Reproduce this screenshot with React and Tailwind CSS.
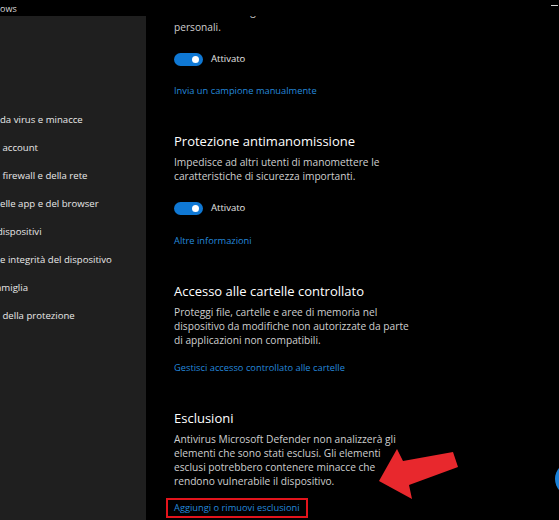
import React from 'react';

const sideItems = [
    { text: 'da virus e minacce', cut: '' },
    { text: ' account', cut: '' },
    { text: ' firewall e della rete', cut: '' },
    { text: 'elle app e del browser', cut: '' },
    { text: 'dispositivi', cut: '-ml-[3px]' },
    { text: 'e integrità del dispositivo', cut: '' },
    { text: 'amiglia', cut: '-ml-[4px]' },
    { text: ' della protezione', cut: '' },
];

const Toggle = () => (
    <div className="flex items-center h-[14px]">
        <div className="w-[29px] h-[13px] rounded-full bg-[#0f78d4] flex items-center justify-end pr-[4px]">
            <div className="w-[7px] h-[7px] rounded-full bg-white" />
        </div>
        <span className="ml-[8px] text-[9.5px] text-[#e6e6e6]">Attivato</span>
    </div>
);

const Link = ({ children, className = '' }) => (
    <div className={`text-[9.3px] leading-[14px] text-[#2589dc] whitespace-nowrap ${className}`}>{children}</div>
);

const Heading = ({ children }) => (
    <h2 className="mt-[33px] text-[13px] leading-[20px] text-white whitespace-nowrap">{children}</h2>
);

const Desc = ({ lines }) => (
    <p className="mt-[4px] text-[10.2px] leading-[14px] text-[#cfcfcf] whitespace-nowrap">
        {lines.map((l, i) => (
            <React.Fragment key={i}>
                {l}
                {i < lines.length - 1 && <br />}
            </React.Fragment>
        ))}
    </p>
);

const App = () => {
    return (
        <div className="relative w-[559px] h-[520px] bg-black overflow-hidden flex flex-col font-['Open_Sans',sans-serif]">
            {/* title bar */}
            <div className="h-[16px] flex items-center justify-between shrink-0 relative z-10 bg-black">
                <span className="text-[9px] text-[#d8d8d8] leading-none">ows</span>
                <div className="w-[7px] h-[1px] bg-[#cfcfcf] mr-[1px] -mt-[6px]" />
            </div>

            <div className="flex flex-1 min-h-0">
                {/* sidebar */}
                <div className="w-[146px] bg-[#1f1f1f] pt-[90px] shrink-0 overflow-hidden">
                    {sideItems.map((item) => (
                        <div key={item.text} className={`h-[28px] flex items-center whitespace-pre text-[9.6px] text-[#e8e8e8] ${item.cut}`}>
                            {item.text}
                        </div>
                    ))}
                </div>

                {/* main */}
                <div className="flex-1 pl-[28px] overflow-hidden">
                    <p className="-mt-[13px] text-[10.2px] leading-[16px] text-[#cfcfcf] whitespace-nowrap">
                        richiesto contenga informazioni<br />personali.
                    </p>

                    <div className="mt-[17px]"><Toggle /></div>
                    <Link className="mt-[18px]">Invia un campione manualmente</Link>

                    <Heading>Protezione antimanomissione</Heading>
                    <Desc lines={['Impedisce ad altri utenti di manomettere le', 'caratteristiche di sicurezza importanti.']} />
                    <div className="mt-[18px]"><Toggle /></div>
                    <Link className="mt-[19px]">Altre informazioni</Link>

                    <Heading>Accesso alle cartelle controllato</Heading>
                    <Desc
                        lines={[
                            'Proteggi file, cartelle e aree di memoria nel',
                            'dispositivo da modifiche non autorizzate da parte',
                            'di applicazioni non compatibili.',
                        ]}
                    />
                    <Link className="mt-[14px]">Gestisci accesso controllato alle cartelle</Link>

                    <Heading>Esclusioni</Heading>
                    <Desc
                        lines={[
                            'Antivirus Microsoft Defender non analizzerà gli',
                            'elementi che sono stati esclusi. Gli elementi',
                            'esclusi potrebbero contenere minacce che',
                            'rendono vulnerabile il dispositivo.',
                        ]}
                    />
                    <div className="mt-[10px] -ml-[8px] w-[142px] border-2 border-[#e3141c] pl-[6px] pt-[1px] pb-[1px]">
                        <Link>Aggiungi o rimuovi esclusioni</Link>
                    </div>
                </div>
            </div>

            {/* red arrow annotation */}
            <svg className="absolute left-0 top-0 pointer-events-none" width="559" height="520" viewBox="0 0 559 520">
                <polygon
                    points="379,481 397,449 403,461 453,452 458,467 409,485 412,499"
                    fill="#e8282d"
                />
            </svg>

            {/* partially visible blue button at right edge */}
            <div className="absolute left-[555px] top-[462px] w-[34px] h-[34px] rounded-full bg-[#1a80d8]" />
        </div>
    );
};

export default App;
